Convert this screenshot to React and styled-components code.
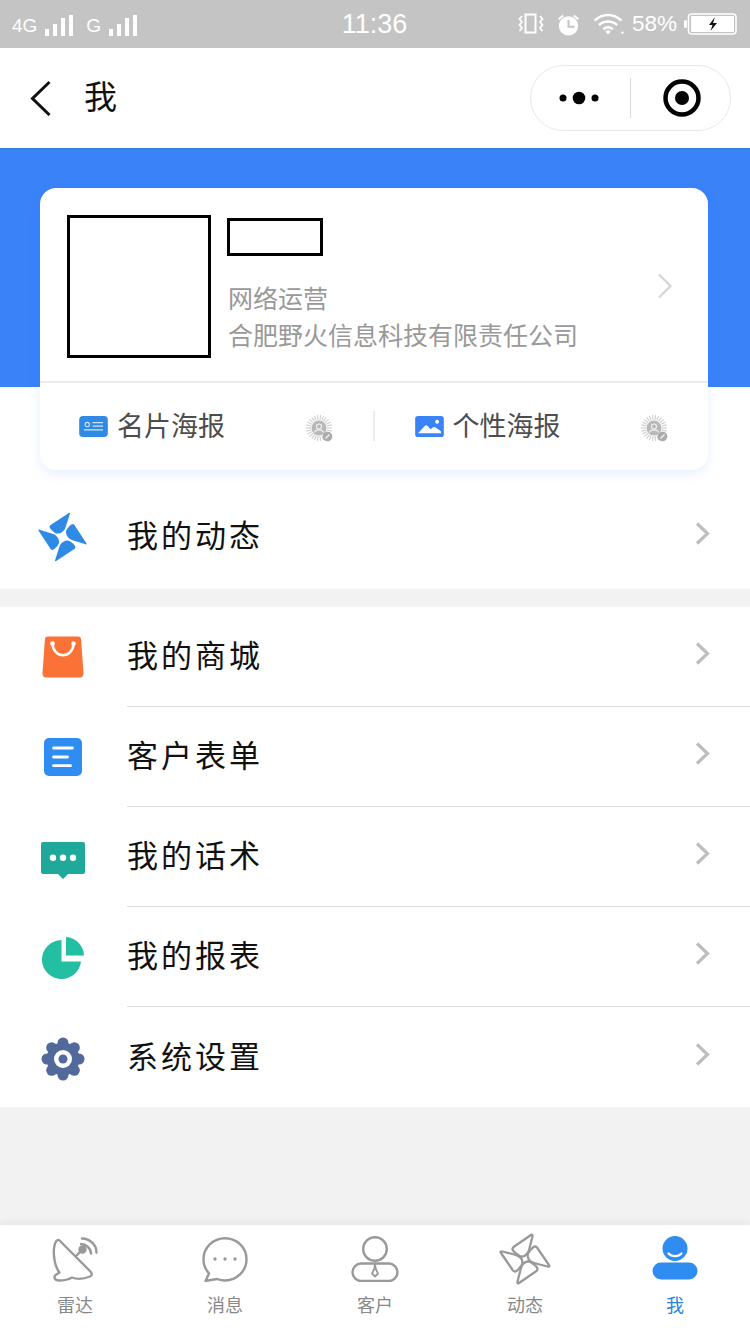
import React from "react";
import styled, { createGlobalStyle } from "styled-components";

const Global = createGlobalStyle`
  html, body { margin: 0; padding: 0; background: #f2f2f2; }
  body { font-family: "Noto Sans CJK SC", "Liberation Sans", sans-serif; }
  * { box-sizing: border-box; }
`;
const Page = styled.div`
  width: 750px; height: 1333px; display: flex; flex-direction: column; overflow: hidden; background: #f2f2f2;
`;
const StatusBar = styled.div`
  height: 48px; background: #c4c4c4; color: #fff; display: grid; grid-template-columns: 1fr auto 1fr; align-items: center;
  padding: 0 13px 0 12px; font-family: "Liberation Sans", sans-serif; flex: none;
`;
const StatusLeft = styled.div`display: flex; align-items: center; gap: 8px; font-size: 19px; padding-top: 2px;`;
const SimLabel = styled.span`margin-left: ${p => p.$gap || 0}px; line-height: 1;`;
const StatusRight = styled.div`display: flex; align-items: center; justify-content: flex-end; gap: 13px;`;
const StatusGroup = styled.div`display: flex; align-items: center; gap: 7px; font-size: 22.5px;`;
const Clock = styled.div`font-size: 27px; padding-top: 1px;`;
const NavBar = styled.div`
  height: 100px; background: #fff; display: flex; align-items: center; padding: 0 19px 0 28px; flex: none;
`;
const NavTitle = styled.div`font-size: 33px; color: #111; margin-left: 30px; line-height: 1; flex: 1; padding-bottom: 6px;`;
const Capsule = styled.div`
  width: 201px; height: 66px; border: 1px solid #e8e8e8; border-radius: 33px; display: flex; align-items: center; margin-top: -1px;
`;
const CapsulePart = styled.div`flex: 1; display: flex; align-items: center; justify-content: center; padding-left: ${p => p.$left || 0}px; padding-right: ${p => p.$right || 0}px;`;
const CapsuleLine = styled.div`width: 1px; height: 40px; background: #dcdcdc;`;
const Hero = styled.div`
  background: #fff; flex: none; position: relative; padding: 40px 42px 0 40px; height: 322px;
  &::before { content: ""; position: absolute; inset: 0 0 83px 0; background: #3a82f8; border-top: 1px solid #377bdf; }
`;
const Card = styled.div`
  position: relative; background: #fff; border-radius: 16px; height: 282px; box-shadow: 0 4px 12px rgba(58,130,248,.12); display: flex; flex-direction: column;
`;
const Profile = styled.div`
  height: 195px; border-bottom: 2px solid #ececec; display: flex; padding: 27px 35px 0 27px;
`;
const Avatar = styled.div`width: 144px; height: 143px; border: 3px solid #000; flex: none;`;
const Info = styled.div`flex: 1; margin-left: 17px; display: flex; flex-direction: column; align-items: flex-start;`;
const NameBox = styled.div`width: 96px; height: 38px; border: 3px solid #000; margin: 3px 0 23px -1px;`;
const Sub = styled.div`font-size: 25px; line-height: 37px; color: #999; white-space: nowrap;`;
const CardArrow = styled.div`align-self: center; margin-bottom: 24px; display: flex;`;
const Actions = styled.div`flex: 1; display: flex; align-items: center;`;
const Action = styled.div`flex: 1; display: flex; align-items: center; padding: 0 40px 0 ${p => p.$left}px; height: 40px;`;
const ActionText = styled.div`font-size: 27px; color: #4d4d4d; margin-left: ${p => p.$gap}px; flex: 1; line-height: 1; padding-bottom: 4px;`;
const MiniWrap = styled.div`display: flex; margin-top: 4px;`;
const ActionLine = styled.div`width: 2px; height: 30px; background: #ececec; margin-bottom: 2px;`;
const Group = styled.div`background: #fff; flex: none; margin-bottom: ${p => p.$gap}px;`;
const Row = styled.div`
  height: ${p => p.$h}px; display: flex; align-items: center; padding-left: 36px; padding-top: ${p => p.$top || 0}px;
`;
const IconCell = styled.div`
  width: 53px; height: 56px; display: flex; align-items: center; justify-content: center; flex: none; margin-top: ${p => p.$dy || 0}px;
`;
const RowBody = styled.div`
  flex: 1; align-self: stretch; margin-left: 38px; display: flex; align-items: center; padding-right: 40px;
  border-bottom: ${p => p.$line ? "1px solid #dedede" : "none"};
`;
const RowText = styled.div`flex: 1; font-size: 31px; letter-spacing: 3px; color: #111; line-height: 1; padding-bottom: 6px;`;
const RowArrow = styled.div`display: flex; margin-bottom: 6px;`;
const TabBar = styled.div`
  margin-top: auto; height: 108px; background: #fff; display: grid; grid-template-columns: repeat(5, 1fr); flex: none;
  box-shadow: 0 -2px 8px rgba(0,0,0,.06);
`;
const Tab = styled.div`display: flex; flex-direction: column; align-items: center; padding-top: 6px;`;
const TabIcon = styled.div`height: 56px; display: flex; align-items: center; justify-content: center;`;
const TabLabel = styled.div`font-size: 18px; line-height: 24px; margin-top: 5px; color: ${p => p.$active ? "#2b82d8" : "#888"};`;

const Chevron = ({ w = 13, h = 23, color = "#bdbdbd", sw = 3.2 }) => (
  <svg width={w + 2} height={h} viewBox={`0 0 ${w + 2} ${h}`} fill="none">
    <path d={`M2 1.500L${w - 0.5} ${h / 2}L2 ${h - 1.5}`} stroke={color} strokeWidth={sw} />
  </svg>
);
const Bars = () => (
  <svg width="28" height="21" viewBox="0 0 28 21" fill="#fff">
    <rect x="0" y="14" width="4" height="7" /><rect x="8" y="9" width="4" height="12" /><rect x="16" y="3" width="4" height="18" /><rect x="24" y="0" width="4" height="21" />
  </svg>
);
const Vibrate = () => (
  <svg width="26" height="22" viewBox="0 0 26 22" fill="none" stroke="#fff" strokeWidth="2">
    <rect x="7.500" y="1.500" width="10" height="18" />
    <path d="M4 3L1.500 6 4 9 1.500 12 4 15 1.500 18M22 3l2.500 3L22 9l2.500 3L22 15l2.500 3" strokeWidth="1.800" />
  </svg>
);
const Alarm = () => (
  <svg width="23" height="23" viewBox="0 0 25 25" fill="#fff">
    <circle cx="12.500" cy="14" r="10.500" />
    <path d="M1 6l5-4 1.500 1.500-5 4zM24 6l-5-4-1.500 1.500 5 4z" />
    <path d="M12.500 7.500V15H19" stroke="#c4c4c4" strokeWidth="2.200" fill="none" />
  </svg>
);
const Wifi = () => (
  <svg width="32" height="23" viewBox="0 0 32 24" fill="none" stroke="#fff" strokeWidth="2.600">
    <path d="M1 8C9 0 21 0 29 8M5.500 12.500C11 7.500 19 7.500 24.500 12.500M10 17c3-2.500 7-2.500 10 0" />
    <path d="M12 19.500l3-2 3 2-3 3z" fill="#fff" stroke="none" />
    <path d="M28 19.500h4l-2 3z" fill="#fff" stroke="none" />
  </svg>
);
const Battery = () => (
  <svg width="53" height="22" viewBox="0 0 53 22">
    <rect x="0" y="7" width="3" height="8" rx="1.500" fill="#fff" />
    <rect x="4.500" y="1" width="47.500" height="20" rx="3" fill="none" stroke="#fff" strokeWidth="1.500" />
    <rect x="7" y="3" width="43" height="16" rx="1" fill="#fff" />
    <path d="M31 4l-6 8h3.500l-2 6 6.500-8h-4z" fill="#111" />
  </svg>
);
const Back = () => (
  <svg width="26" height="36" viewBox="0 0 26 36" fill="none"><path d="M21.500 2L4.500 18.500 21.500 35" stroke="#111" strokeWidth="3" /></svg>
);
const Dots = () => (
  <svg width="40" height="14" viewBox="0 0 40 14" fill="#000"><circle cx="4" cy="7" r="3.500" /><circle cx="20" cy="7" r="6.300" /><circle cx="36" cy="7" r="3.500" /></svg>
);
const Target = () => (
  <svg width="38" height="38" viewBox="0 0 38 38"><circle cx="19" cy="19" r="16.500" fill="none" stroke="#000" strokeWidth="4.500" /><circle cx="19" cy="19" r="7" fill="#000" /></svg>
);
const CardIcon = () => (
  <svg width="29" height="21" viewBox="0 0 30 22">
    <rect width="30" height="22" rx="4" fill="#2f8ae6" />
    <circle cx="8.500" cy="9" r="2.300" fill="none" stroke="#cfe4fa" strokeWidth="1.200" />
    <path d="M5 14.500h20M14 7h11M14 10.500h11" stroke="#cfe4fa" strokeWidth="1.300" />
  </svg>
);
const PicIcon = () => (
  <svg width="29" height="21" viewBox="0 0 30 22">
    <rect width="30" height="22" rx="3" fill="#3a82f8" />
    <circle cx="23" cy="6" r="2" fill="#fff" />
    <path d="M3 18l7-7.500c1-1 2-1 3 0l3 3.500 2.500-2c1-.800 2-.800 3 0L27 16v2z" fill="#fff" />
  </svg>
);
const Mini = () => (
  <svg width="27" height="27" viewBox="0 0 27 27">
    <g stroke="#cdcdcd" strokeWidth="1.100">
      {Array.from({ length: 26 }).map((_, i) => {
        const a = (i / 26) * Math.PI * 2;
        return <line key={i} x1={13 + Math.cos(a) * 8} y1={13 + Math.sin(a) * 8} x2={13 + Math.cos(a) * 13} y2={13 + Math.sin(a) * 13} />;
      })}
    </g>
    <circle cx="13" cy="13" r="7.500" fill="#b8b8b8" />
    <circle cx="13" cy="11.500" r="2.500" fill="none" stroke="#f4f4f4" strokeWidth="1.100" />
    <path d="M8.500 17.500c1-3.500 8-3.500 9 0" fill="none" stroke="#f4f4f4" strokeWidth="1.100" />
    <circle cx="21.500" cy="21.500" r="4.800" fill="#ababab" />
    <path d="M19.500 23.500l4-4" stroke="#f4f4f4" strokeWidth="1.200" />
  </svg>
);
const PinFilled = () => (
  <svg width="54" height="54" viewBox="-27 -27 54 54">
    {[0, 90, 180, 270].map(r => (
      <path key={r} d="M6.500-24.500C7.500-25 8-24.500 7.500-23.500L3-9.500C2-6-2-3.500-5-3.500-7-3.500-9-5-11-7-13-9-14-10.500-12.500-12Z" transform={`rotate(${r})`} fill="#2f8ae6" />
    ))}
  </svg>
);
const PinOutline = () => (
  <svg width="54" height="54" viewBox="-27 -27 54 54">
    {[0, 90, 180, 270].map(r => (
      <path key={r} d="M6-24C7-25 8-24 7.500-22.500L4-9C3-4-2-1.500-5.500-3-8-4.500-10.500-6.500-12-8.500-13-10-12.500-11-11.500-12Z" transform={`rotate(${r})`} fill="none" stroke="#999" strokeWidth="2.300" strokeLinejoin="round" />
    ))}
  </svg>
);
const Bag = () => (
  <svg width="42" height="42" viewBox="0 0 42 42">
    <path d="M6 0.500h30c1.800 0 3 1 3.100 2.800L41.500 37c.2 2.500-1.300 4.500-3.500 4.500H4C1.800 41.500.3 39.500.5 37L2.900 3.300C3 1.500 4.200.5 6 .5z" fill="#fb7237" />
    <path d="M10.500 8c1 15 20 15 21 0" fill="none" stroke="#fff" strokeWidth="2.600" strokeLinecap="round" />
    <circle cx="10.500" cy="7.500" r="2.300" fill="#fff" /><circle cx="31.500" cy="7.500" r="2.300" fill="#fff" />
  </svg>
);
const Form = () => (
  <svg width="38" height="38" viewBox="0 0 38 38">
    <rect width="38" height="38" rx="5" fill="#2f8cf0" />
    <path d="M9.500 10h19M9.500 19h14M9.500 27.700h17" stroke="#fff" strokeWidth="2.800" strokeLinecap="round" />
  </svg>
);
const Speech = () => (
  <svg width="44" height="37" viewBox="0 0 44 37">
    <path d="M2 0h40a2 2 0 0 1 2 2v28a2 2 0 0 1-2 2H27l-5 5-5-5H2a2 2 0 0 1-2-2V2a2 2 0 0 1 2-2z" fill="#1fa99a" />
    <circle cx="12" cy="15.700" r="3.200" fill="#fff" /><circle cx="22" cy="15.700" r="3.200" fill="#fff" /><circle cx="32" cy="15.700" r="3.200" fill="#fff" />
  </svg>
);
const Pie = () => (
  <svg width="42" height="42" viewBox="0 0 42 42" fill="#22bfa3">
    <path d="M19.500 3V24.500H39C38 34 30 42 19.500 42 8.700 42 0 33 0 22.500 0 12 8.500 3.500 19.500 3z" />
    <path d="M24 0C34 .5 41.500 8.500 42 18.500H24z" />
  </svg>
);
const Gear = () => {
  const teeth = Array.from({ length: 8 }, (_, i) => i * 45);
  return (
    <svg width="44" height="44" viewBox="-22 -22 44 44">
      <g fill="#52699b">
        {teeth.map(a => <circle key={a} cx="0" cy="-16" r="5.500" transform={`rotate(${a})`} />)}
        <circle r="16.500" />
      </g>
      <circle r="9" fill="#fff" /><circle r="4.500" fill="#52699b" />
    </svg>
  );
};
const Radar = () => (
  <svg width="46" height="46" viewBox="0 0 46 46" fill="none" stroke="#999" strokeWidth="2.400" strokeLinecap="round" strokeLinejoin="round">
    <path d="M7.500 4.500L38.500 35.500C40.500 37.500 40 39.500 38 40.500 32 43 25 43.500 20 41.500 16.500 43.500 12 44.500 7 44.500 2.500 44.500 1.500 41 3.500 39L7.500 36.500C4 32 2.500 26 2 20 1.500 14 2 9 4 5.500 5 4 6.500 3.500 7.500 4.500Z" />
    <path d="M24 20L29 15" />
    <circle cx="30.500" cy="13.500" r="3" fill="#999" />
    <path d="M29 8c5 0 10 4.500 10 9.500M30 2.500c8 0 14.500 6.500 14.500 14" />
  </svg>
);
const Chat = () => (
  <svg width="46" height="45" viewBox="0 0 46 45" fill="none" stroke="#999" strokeWidth="2.400" strokeLinejoin="round">
    <path d="M23 1.200c12 0 21.500 9.500 21.500 21S35 43.500 23 43.500c-3 0-5.500-.5-8-1.500L3.500 44 7 36.500C3.500 32.500 1.500 27.500 1.500 22.200 1.500 10.700 11 1.200 23 1.200z" />
    <circle cx="13" cy="22" r="1.700" fill="#999" stroke="none" /><circle cx="23" cy="22" r="1.700" fill="#999" stroke="none" /><circle cx="33" cy="22" r="1.700" fill="#999" stroke="none" />
  </svg>
);
const Client = () => (
  <svg width="48" height="46" viewBox="0 0 48 46" fill="none" stroke="#999" strokeWidth="2.400" strokeLinejoin="round">
    <circle cx="24" cy="13" r="11.800" />
    <rect x="1.500" y="27.500" width="45" height="17.500" rx="8.700" />
    <path d="M24 28l-.8 5-2.200 4.500 3 3 3-3-2.200-4.500z" strokeWidth="1.800" />
  </svg>
);
const Me = () => (
  <svg width="46" height="46" viewBox="0 0 46 46" fill="#2f8cf0">
    <circle cx="23" cy="12.500" r="12.500" />
    <rect x="0.500" y="26.500" width="45" height="17" rx="8.500" />
    <path d="M16.500 17.500c3 3.500 10 3.500 13 0" fill="none" stroke="#fff" strokeWidth="2.200" strokeLinecap="round" />
  </svg>
);

const list2 = [
  { t: "我的商城", i: <Bag /> },
  { t: "客户表单", i: <Form /> },
  { t: "我的话术", i: <Speech />, dy: 7 },
  { t: "我的报表", i: <Pie />, dy: 2 },
  { t: "系统设置", i: <Gear />, dy: 3 },
];
const tabs = [
  { t: "雷达", i: <Radar /> },
  { t: "消息", i: <Chat /> },
  { t: "客户", i: <Client /> },
  { t: "动态", i: <PinOutline /> },
  { t: "我", i: <Me />, active: true },
];

export default function App() {
  return (
    <Page>
      <Global />
      <StatusBar>
        <StatusLeft><SimLabel>4G</SimLabel><Bars /><SimLabel $gap={5}>G</SimLabel><Bars /></StatusLeft>
        <Clock>11:36</Clock>
        <StatusRight>
          <Vibrate />
          <Alarm />
          <StatusGroup><Wifi /><span>58%</span><Battery /></StatusGroup>
        </StatusRight>
      </StatusBar>
      <NavBar>
        <Back />
        <NavTitle>我</NavTitle>
        <Capsule>
          <CapsulePart $right={2}><Dots /></CapsulePart>
          <CapsuleLine />
          <CapsulePart $left={3}><Target /></CapsulePart>
        </Capsule>
      </NavBar>
      <Hero>
        <Card>
          <Profile>
            <Avatar />
            <Info>
              <NameBox />
              <Sub>网络运营</Sub>
              <Sub>合肥野火信息科技有限责任公司</Sub>
            </Info>
            <CardArrow><Chevron w={14} h={26} color="#d6d6d6" sw={2.400} /></CardArrow>
          </Profile>
          <Actions>
            <Action $left={39}><CardIcon /><ActionText $gap={9}>名片海报</ActionText><MiniWrap><Mini /></MiniWrap></Action>
            <ActionLine />
            <Action $left={40}><PicIcon /><ActionText $gap={9}>个性海报</ActionText><MiniWrap><Mini /></MiniWrap></Action>
          </Actions>
        </Card>
      </Hero>
      <Group $gap={18}>
        <Row $h={119} $top={14}>
          <IconCell><PinFilled /></IconCell>
          <RowBody><RowText>我的动态</RowText><RowArrow><Chevron /></RowArrow></RowBody>
        </Row>
      </Group>
      <Group $gap={0}>
        {list2.map((r, i) => (
          <Row key={r.t} $h={100}>
            <IconCell $dy={r.dy}>{r.i}</IconCell>
            <RowBody $line={i < list2.length - 1}><RowText>{r.t}</RowText><RowArrow><Chevron /></RowArrow></RowBody>
          </Row>
        ))}
      </Group>
      <TabBar>
        {tabs.map(t => (
          <Tab key={t.t}><TabIcon>{t.i}</TabIcon><TabLabel $active={t.active}>{t.t}</TabLabel></Tab>
        ))}
      </TabBar>
    </Page>
  );
}
